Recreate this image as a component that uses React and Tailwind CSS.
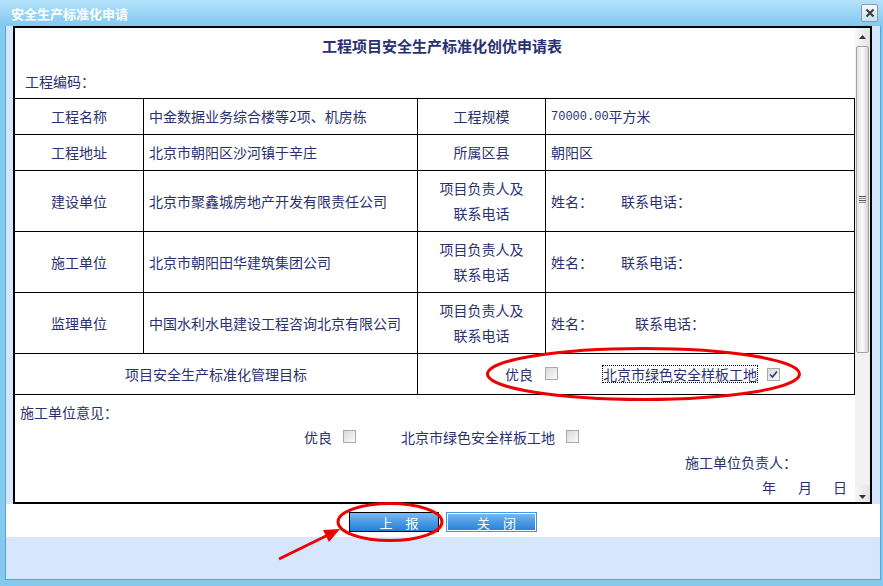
const ink = "text-[#2a3170]";

function Box({ checked }) {
  return (
    <span className="inline-flex h-[13px] w-[13px] items-center justify-center border border-[#a9a9a9] bg-gradient-to-br from-[#d9d9d9] to-[#fbfbfb]">
      {checked && (
        <svg width="11" height="11" viewBox="0 0 11 11">
          <path d="M2 5.5 L4.5 8 L9 2.5" fill="none" stroke="#2c3f8f" strokeWidth="1.7" />
        </svg>
      )}
    </span>
  );
}

function Cell({ w, children, className = "" }) {
  return (
    <div className={`${w} flex h-full border-r border-black ${className}`}>{children}</div>
  );
}

function Row({ h, children }) {
  return <div className={`${h} flex border-b border-black`}>{children}</div>;
}

function Person({ gap }) {
  return (
    <div className="flex items-center pl-[5px]">
      <span>姓名：</span>
      <span className={gap}>联系电话：</span>
    </div>
  );
}

function TwoLine() {
  return (
    <div className="flex w-full flex-col items-center justify-center leading-[25px]">
      <span>项目负责人及</span>
      <span>联系电话</span>
    </div>
  );
}

function Scrollbar() {
  return (
    <div className="flex w-[15px] flex-col bg-[#f1f1f1]">
      <div className="flex h-[18px] items-center justify-center bg-gradient-to-r from-[#f6f6f6] to-[#e4e4e4]">
        <svg width="7" height="4" viewBox="0 0 7 4"><path d="M0 4 L3.5 0 L7 4 Z" fill="#333" /></svg>
      </div>
      <div className="mx-[1px] flex h-[307px] items-center justify-center rounded-[2px] border border-[#a3a3a3] bg-gradient-to-r from-[#e2e2e2] via-[#fbfbfb] to-[#d3d3d3]">
        <div className="flex flex-col gap-[1px]">
          <span className="h-[1px] w-[7px] bg-[#555]" />
          <span className="h-[1px] w-[7px] bg-[#888]" />
          <span className="h-[1px] w-[7px] bg-[#555]" />
          <span className="h-[1px] w-[7px] bg-[#888]" />
        </div>
      </div>
      <div className="flex-1" />
      <div className="flex h-[17px] items-end justify-center pb-[3px] bg-gradient-to-r from-[#f6f6f6] to-[#e4e4e4]">
        <svg width="7" height="4" viewBox="0 0 7 4"><path d="M0 0 L7 0 L3.5 4 Z" fill="#333" /></svg>
      </div>
    </div>
  );
}

export default function App() {
  return (
    <div
      className="relative flex h-[586px] w-[883px] flex-col overflow-hidden bg-[#84c9ef] pb-[6px] pl-[5px] pr-[2px]"
      style={{ fontFamily: '"Noto Sans CJK SC", "Liberation Sans", sans-serif' }}
    >
      {/* title bar */}
      <div className="-ml-[5px] -mr-[2px] flex h-[26px] items-center justify-between bg-gradient-to-b from-[#b4e2fa] to-[#7fc8f0] pl-[11px] pr-[5px]">
        <span className="text-[13px] font-bold leading-none text-white">安全生产标准化申请</span>
        <span className="flex h-[18px] w-[17px] items-center justify-center rounded-[2px] border border-[#8b9aa6] bg-gradient-to-b from-[#f4fafe] to-[#c9e3f2]">
          <svg width="10" height="10" viewBox="0 0 10 10">
            <path d="M1.5 1.5 L8.5 8.5 M8.5 1.5 L1.5 8.5" stroke="#3f3f3f" strokeWidth="2.2" />
          </svg>
        </span>
      </div>

      {/* body */}
      <div className="flex flex-1 flex-col border-b border-l border-r border-[#4fa7dc]">
        <div className="h-[478px] bg-[#d6e6fc] pl-[7px] pr-[8px]">
          <div className={`flex h-full border-2 border-black bg-white text-[14px] ${ink}`}>
            <div className="flex w-[840px] flex-col">
              <div className="flex h-[36px] items-center justify-center pl-[14px] text-[15px] font-bold">
                工程项目安全生产标准化创优申请表
              </div>
              <div className="flex h-[34px] items-center pl-[10px]">工程编码：</div>

              <div className="border-t border-black">
                <Row h="h-[36px]">
                  <Cell w="w-[129px]" className="items-center justify-center">工程名称</Cell>
                  <Cell w="w-[274px]" className="items-center pl-[5px]">中金数据业务综合楼等2项、机房栋</Cell>
                  <Cell w="w-[128px]" className="items-center justify-center">工程规模</Cell>
                  <Cell w="w-[309px]" className="items-center pl-[5px]">
                    <span className="font-['Liberation_Mono'] text-[12px]">70000.00</span>平方米
                  </Cell>
                </Row>
                <Row h="h-[36px]">
                  <Cell w="w-[129px]" className="items-center justify-center">工程地址</Cell>
                  <Cell w="w-[274px]" className="items-center pl-[5px]">北京市朝阳区沙河镇于辛庄</Cell>
                  <Cell w="w-[128px]" className="items-center justify-center">所属区县</Cell>
                  <Cell w="w-[309px]" className="items-center pl-[5px]">朝阳区</Cell>
                </Row>
                <Row h="h-[61px]">
                  <Cell w="w-[129px]" className="items-center justify-center">建设单位</Cell>
                  <Cell w="w-[274px]" className="items-center pl-[5px]">北京市聚鑫城房地产开发有限责任公司</Cell>
                  <Cell w="w-[128px]"><TwoLine /></Cell>
                  <Cell w="w-[309px]"><Person gap="ml-[28px]" /></Cell>
                </Row>
                <Row h="h-[61px]">
                  <Cell w="w-[129px]" className="items-center justify-center">施工单位</Cell>
                  <Cell w="w-[274px]" className="items-center pl-[5px]">北京市朝阳田华建筑集团公司</Cell>
                  <Cell w="w-[128px]"><TwoLine /></Cell>
                  <Cell w="w-[309px]"><Person gap="ml-[28px]" /></Cell>
                </Row>
                <Row h="h-[61px]">
                  <Cell w="w-[129px]" className="items-center justify-center">监理单位</Cell>
                  <Cell w="w-[274px]" className="items-center pl-[5px]">中国水利水电建设工程咨询北京有限公司</Cell>
                  <Cell w="w-[128px]"><TwoLine /></Cell>
                  <Cell w="w-[309px]"><Person gap="ml-[42px]" /></Cell>
                </Row>
                <Row h="h-[41px]">
                  <Cell w="w-[403px]" className="items-center justify-center">项目安全生产标准化管理目标</Cell>
                  <Cell w="w-[437px]" className="items-center pl-[87px]">
                    <span>优良</span>
                    <span className="ml-[12px]"><Box /></span>
                    <span className="ml-[45px] leading-[16px] outline outline-1 outline-dotted outline-black">北京市绿色安全样板工地</span>
                    <span className="ml-[10px]"><Box checked /></span>
                  </Cell>
                </Row>
              </div>

              <div className="pt-[5px]">
                <div className="flex h-[25px] items-center pl-[5px]">施工单位意见：</div>
                <div className="flex h-[25px] items-center pl-[289px]">
                  <span>优良</span>
                  <span className="ml-[11px]"><Box /></span>
                  <span className="ml-[45px]">北京市绿色安全样板工地</span>
                  <span className="ml-[11px]"><Box /></span>
                </div>
                <div className="flex h-[25px] items-center justify-end pr-[58px]">施工单位负责人：</div>
                <div className="flex h-[25px] items-center justify-end pr-[8px]">
                  <span>年</span>
                  <span className="ml-[22px]">月</span>
                  <span className="ml-[21px]">日</span>
                </div>
              </div>
            </div>
            <Scrollbar />
          </div>
        </div>

        <div className="flex h-[33px] justify-center gap-[7px] bg-white pt-[8px]">
          <button className="flex h-[20px] w-[90px] items-center justify-center border border-black bg-gradient-to-b from-[#7cbaf0] via-[#4a9ae4] to-[#2580d6] pl-[10px] text-[13px] leading-none text-white">
            上　报
          </button>
          <button className="flex h-[20px] w-[91px] items-center justify-center border border-[#3d98e6] bg-gradient-to-b from-[#7cbaf0] via-[#4a9ae4] to-[#2580d6] pl-[10px] text-[13px] leading-none text-white shadow-[inset_0_0_0_1px_#ffffff]">
            关　闭
          </button>
        </div>
        <div className="flex-1 bg-[#d6e6fc]" />
      </div>

      {/* red annotations */}
      <svg className="pointer-events-none absolute left-0 top-0" width="883" height="586">
        <ellipse cx="643.5" cy="374" rx="156" ry="25.5" fill="none" stroke="#ee0000" strokeWidth="3" />
        <ellipse cx="390" cy="522" rx="52" ry="18.5" fill="none" stroke="#ee0000" strokeWidth="3" />
        <line x1="279" y1="559" x2="328" y2="535" stroke="#ee0000" strokeWidth="3" />
        <polygon points="340,529 329,542 323,530" fill="#ee0000" />
      </svg>
    </div>
  );
}
